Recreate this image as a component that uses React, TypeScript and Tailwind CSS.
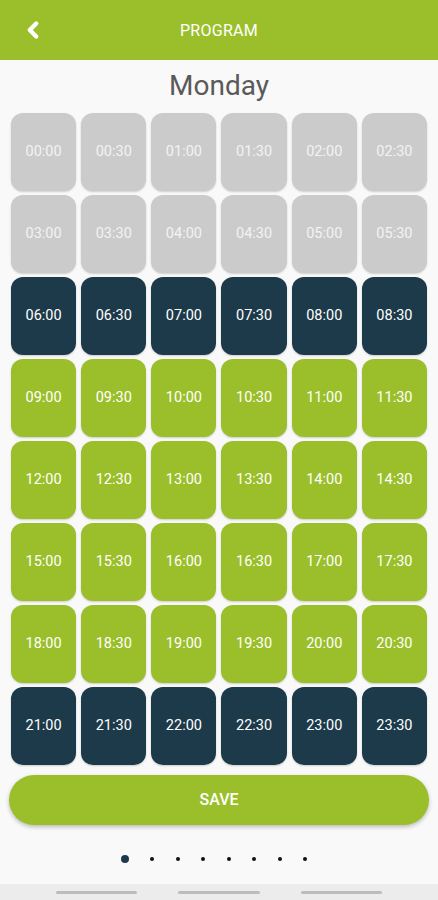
import { ChevronLeft } from 'lucide-react'

type Kind = 'off' | 'night' | 'day'

// 48 slots, half hour each
const slots = Array.from({ length: 48 }, (_, i) => {
  const h = Math.floor(i / 2)
  const label = `${String(h).padStart(2, '0')}:${i % 2 ? '30' : '00'}`
  let kind: Kind = 'day'
  if (h < 6) kind = 'off'
  else if (h < 9 || h >= 21) kind = 'night'
  return { label, kind }
})

const kindClass: Record<Kind, string> = {
  off: 'bg-[#cbcbcb] text-[#f3f3f3]',
  night: 'bg-[#1d3a4a] text-white',
  day: 'bg-[#9bbf2a] text-white',
}

export default function App() {
  return (
    <div
      className="w-[438px] h-[900px] bg-[#f9f9f9] flex flex-col overflow-hidden"
      style={{ fontFamily: 'Roboto, "Liberation Sans", sans-serif' }}
    >
      <header className="h-[60px] bg-[#9bbf2a] flex items-center relative shrink-0">
        <button className="absolute left-[20px] top-[17px] text-white" aria-label="Back">
          <ChevronLeft size={26} strokeWidth={4} />
        </button>
        <h1 className="w-full text-center text-white text-[16px] tracking-[0.3px] pt-[1px]">PROGRAM</h1>
      </header>

      <h2 className="text-center text-[#5a5a5a] text-[28px] leading-[34px] mt-[9px] mb-[10px]">Monday</h2>

      <div className="grid grid-cols-6 gap-x-[5px] gap-y-[4px] px-[11px]">
        {slots.map((s) => (
          <div
            key={s.label}
            className={`h-[78px] rounded-[12px] flex items-center justify-center text-[14.5px] shadow-[0_1px_2px_rgba(0,0,0,0.18)] ${kindClass[s.kind]}`}
          >
            {s.label}
          </div>
        ))}
      </div>

      <div className="px-[9px] mt-[10px]">
        <button className="w-full h-[50px] rounded-full bg-[#9bbf2a] text-white text-[16px] font-medium shadow-[0_2px_4px_rgba(0,0,0,0.25)]">
          SAVE
        </button>
      </div>

      <div className="flex items-center justify-center gap-[21.5px] mt-[30px] pr-[10px]">
        <span className="w-[8px] h-[8px] rounded-full bg-[#1d3a4a]" />
        {Array.from({ length: 7 }, (_, i) => (
          <span key={i} className="w-[4px] h-[4px] rounded-full bg-[#111]" />
        ))}
      </div>

      <div className="mt-auto h-[16px] bg-[#ececec] flex items-center justify-center gap-[41px]">
        <span className="w-[81px] h-[3px] rounded-full bg-[#bdbdbd]" />
        <span className="w-[82px] h-[3px] rounded-full bg-[#bdbdbd]" />
        <span className="w-[81px] h-[3px] rounded-full bg-[#bdbdbd]" />
      </div>
    </div>
  )
}
